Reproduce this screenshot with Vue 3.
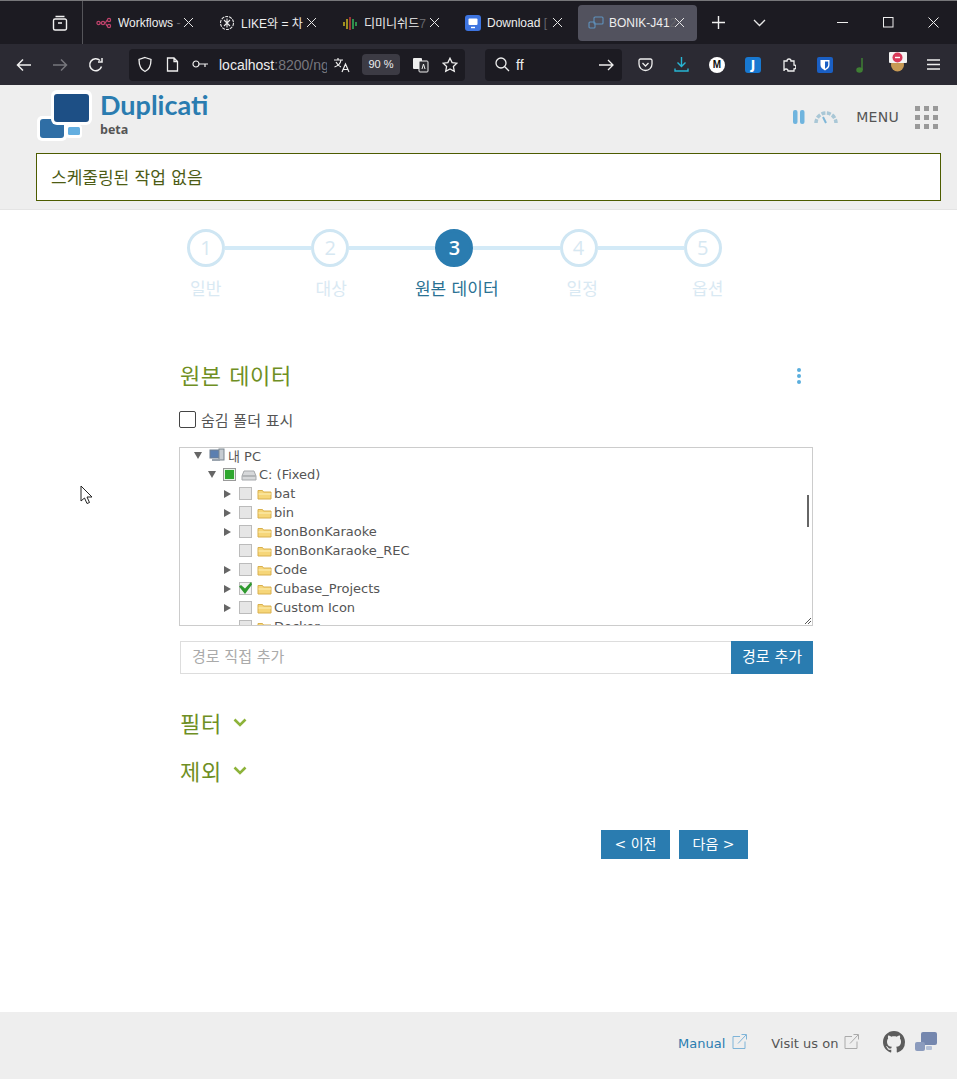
<script setup>
const tabs = [
  { title: 'Workflows', fade: ' -', icon: 'flow' },
  { title: 'LIKE와 = 차', fade: '', icon: 'gpt' },
  { title: '디미니쉬드', fade: '7', icon: 'wave' },
  { title: 'Download', fade: ' [', icon: 'dl' },
  { title: 'BONIK-J41', fade: '2', icon: 'dup', active: true }
]

const steps = [
  { n: 1, label: '일반' },
  { n: 2, label: '대상' },
  { n: 3, label: '원본 데이터', active: true },
  { n: 4, label: '일정' },
  { n: 5, label: '옵션' }
]

const folders = [
  { name: 'bat', arrow: true },
  { name: 'bin', arrow: true },
  { name: 'BonBonKaraoke', arrow: true },
  { name: 'BonBonKaraoke_REC', arrow: false },
  { name: 'Code', arrow: true },
  { name: 'Cubase_Projects', arrow: true, checked: true },
  { name: 'Custom Icon', arrow: true },
  { name: 'Docker', arrow: false }
]
</script>

<template>
  <div class="page">
    <div class="tabbar">
      <div class="tabs-btn">
        <svg width="18" height="18" viewBox="0 0 18 18" fill="none" stroke="#f2f2f2" stroke-width="1.4"><path d="M4.5 2.5h9M2.5 6.5a1.5 1.5 0 0 1 1.5-1.5h10a1.5 1.5 0 0 1 1.5 1.5v8a1.5 1.5 0 0 1-1.5 1.5H4a1.5 1.5 0 0 1-1.5-1.5zM7 9h4"/></svg>
      </div>
      <div v-for="t in tabs" :key="t.title" class="tab" :class="{ 'tab-active': t.active }">
        <svg v-if="t.icon === 'flow'" width="16" height="16" viewBox="0 0 16 16" fill="none" stroke="#c0436c" stroke-width="1.2"><circle cx="2.5" cy="8" r="1.6"/><circle cx="7" cy="8" r="1.6"/><circle cx="13" cy="5" r="1.6"/><circle cx="13" cy="11" r="1.6"/><path d="M4 8h1.5M8.6 8c2 0 1.5-3 2.8-3M8.6 8c2 0 1.5 3 2.8 3"/></svg>
        <svg v-else-if="t.icon === 'gpt'" width="16" height="16" viewBox="0 0 16 16" fill="none" stroke="#e8e8e8" stroke-width="1.1"><circle cx="8" cy="8" r="6.5" stroke-dasharray="3 1"/><path d="M5 5l6 6M11 5l-6 6M8 3.5v9"/></svg>
        <svg v-else-if="t.icon === 'wave'" width="16" height="16" viewBox="0 0 16 16" fill="none" stroke-width="1.4"><path d="M2 7v4M5 4v10" stroke="#d8c020"/><path d="M8 2v13" stroke="#d04040"/><path d="M11 4v10M14 7v4" stroke="#38c060"/></svg>
        <svg v-else-if="t.icon === 'dl'" width="16" height="16" viewBox="0 0 16 16"><rect width="16" height="16" rx="3" fill="#3d74e0"/><rect x="3.5" y="3.5" width="9" height="6.5" rx="1" fill="#fff"/><path d="M6 12.5h4" stroke="#fff" stroke-width="1.4"/></svg>
        <svg v-else width="16" height="14" viewBox="0 0 16 14" fill="none" stroke="#5f92bd" stroke-width="1.1"><rect x="6" y="1" width="9" height="7" rx="1"/><rect x="1" y="6" width="6" height="6" rx="1"/></svg>
        <span class="tab-title">{{ t.title }}<i>{{ t.fade }}</i></span>
        <svg class="tab-x" width="11" height="11" viewBox="0 0 11 11" stroke="#e6e6e6" stroke-width="1"><path d="M1 1l9 9M10 1l-9 9"/></svg>
      </div>
      <svg class="plus" width="13" height="13" viewBox="0 0 13 13" stroke="#f0f0f0" stroke-width="1.4"><path d="M6.5 0v13M0 6.5h13"/></svg>
      <svg class="chev" width="13" height="8" viewBox="0 0 13 8" fill="none" stroke="#e8e8e8" stroke-width="1.3"><path d="M1 1l5.5 5.5L12 1"/></svg>
      <div class="winbtns">
        <svg width="11" height="11" viewBox="0 0 11 11" stroke="#eee"><path d="M0 5.5h11"/></svg>
        <svg width="11" height="11" viewBox="0 0 11 11" fill="none" stroke="#eee"><rect x=".5" y=".5" width="9.5" height="9.5"/></svg>
        <svg width="11" height="11" viewBox="0 0 11 11" stroke="#eee"><path d="M.5.5l10 10M10.5.5l-10 10"/></svg>
      </div>
    </div>

    <div class="toolbar">
      <svg class="nav-first" width="16" height="14" viewBox="0 0 16 14" fill="none" stroke="#f0f0f0" stroke-width="1.5"><path d="M15 7H1.5M7 1.5L1.5 7 7 12.5"/></svg>
      <svg width="16" height="14" viewBox="0 0 16 14" fill="none" stroke="#77777d" stroke-width="1.5"><path d="M1 7h13.5M9 1.5L14.5 7 9 12.5"/></svg>
      <svg width="16" height="16" viewBox="0 0 16 16" fill="none" stroke="#f0f0f0" stroke-width="1.5"><path d="M13.5 9.5A6 6 0 1 1 12 3.5M14 1v4h-4"/></svg>
      <div class="urlbar">
        <svg width="16" height="17" viewBox="0 0 16 17" fill="none" stroke="#eee" stroke-width="1.3"><path d="M8 1.5l6 2c0 6-1.500 10-6 12-4.500-2-6-6-6-12z"/></svg>
        <svg width="13" height="15" viewBox="0 0 13 15" fill="none" stroke="#eee" stroke-width="1.3"><path d="M1.500 1h6.500l3.500 3.500V14h-10zM8 1v3.500h3.500"/></svg>
        <svg width="17" height="9" viewBox="0 0 17 9" fill="none" stroke="#eee" stroke-width="1.2"><circle cx="4" cy="4" r="3"/><path d="M7 4h9M13 4v3"/></svg>
        <span class="url">localhost<i>:8200/ng</i></span>
        <span class="translate-a">
          <svg width="17" height="16" viewBox="0 0 17 16" fill="none" stroke="#eee" stroke-width="1.2"><path d="M1 3h9M5 1v2M8 3c-.5 3-3 6-6.500 7M3 5c1 2 3 4 5 5M9 15l3.500-8 3.500 8M10.500 12.500h4"/></svg>
        </span>
        <span class="zoom-pill">90 %</span>
        <svg width="17" height="16" viewBox="0 0 17 16"><rect x="1" y="1" width="9" height="11" rx="1" fill="#eee"/><rect x="7" y="4" width="9" height="11" rx="1" fill="#2a2a30" stroke="#eee"/><path d="M10 12l1.500-5 1.500 5" stroke="#eee" fill="none"/></svg>
        <svg width="16" height="16" viewBox="0 0 16 16" fill="none" stroke="#eee" stroke-width="1.3"><path d="M8 1.200l2.100 4.400 4.700.6-3.400 3.300.9 4.800L8 12l-4.300 2.300.9-4.800L1.200 6.200l4.700-.6z"/></svg>
      </div>
      <div class="searchbar">
        <svg width="15" height="15" viewBox="0 0 15 15" fill="none" stroke="#eee" stroke-width="1.3"><circle cx="6" cy="6" r="5"/><path d="M9.800 9.800L14 14"/></svg>
        <span class="search-text">ff</span>
        <svg class="search-go" width="15" height="12" viewBox="0 0 15 12" fill="none" stroke="#eee" stroke-width="1.3"><path d="M0 6h14M9 1l5 5-5 5"/></svg>
      </div>
      <div class="ext">
        <svg width="15" height="14" viewBox="0 0 15 14" fill="none" stroke="#eee" stroke-width="1.3"><path d="M1 2.500A1.500 1.500 0 0 1 2.500 1h10A1.500 1.500 0 0 1 14 2.500V6a6.500 6.500 0 0 1-13 0zM4.500 5l3 3 3-3"/></svg>
        <svg width="15" height="15" viewBox="0 0 15 15" fill="none" stroke="#27b5d4" stroke-width="1.400"><path d="M7.500 0v9M3.500 5.500l4 4 4-4M1 11.500v2.500h13v-2.500"/></svg>
        <span class="ext-m">M</span>
        <span class="ext-j">J</span>
        <svg width="14" height="16" viewBox="0 0 14 16" fill="none" stroke="#eee" stroke-width="1.3"><path d="M1 5h3a2 2 0 1 1 4 0h3v4a2 2 0 1 1 0 4v2H5a2 2 0 1 0-4 0z" transform="translate(1 -1)"/></svg>
        <svg width="16" height="16" viewBox="0 0 16 16"><rect width="16" height="16" rx="2" fill="#1a5fc4"/><path d="M3.500 3h9v5c0 2.500-2 4-4.500 5.500C5.500 12 3.500 10.500 3.500 8z" fill="#fff"/><path d="M8 4.500h3.200V8c0 1.500-1.500 2.800-3.200 3.800z" fill="#1a5fc4"/></svg>
        <svg width="10" height="16" viewBox="0 0 10 16" fill="none" stroke="#3f7f34" stroke-width="1.500"><ellipse cx="3.500" cy="13" rx="2.500" ry="2" fill="#3f7f34"/><path d="M6 13V1"/></svg>
        <span class="ext-stop">
          <svg width="19" height="22" viewBox="0 0 19 22"><circle cx="9.500" cy="14" r="6.500" fill="#c79a55"/><rect x="1" y="1" width="18" height="11" rx="1" fill="#f4f4f4"/><circle cx="9.500" cy="6.500" r="5" fill="#d83a5a"/><path d="M7 6.500h5" stroke="#fff" stroke-width="1.400"/></svg>
        </span>
        <svg width="13" height="11" viewBox="0 0 13 11" stroke="#eee" stroke-width="1.300"><path d="M0 1h13M0 5.500h13M0 10h13"/></svg>
      </div>
    </div>

    <header class="app-header">
      <div class="brand-row">
        <div class="brand">
          <svg class="logo" width="57" height="52" viewBox="0 0 57 52">
            <rect x="1" y="26" width="30" height="25" rx="5" fill="#fff"/>
            <rect x="4" y="29" width="24" height="19" rx="3" fill="#2f6ea5"/>
            <rect x="30" y="35" width="16" height="13" rx="3" fill="#fff"/>
            <rect x="32" y="37" width="12" height="8" rx="1.500" fill="#63aee0"/>
            <rect x="15" y="0" width="41" height="35" rx="6" fill="#fff"/>
            <rect x="18" y="4" width="35" height="28" rx="3" fill="#1d4f85"/>
          </svg>
          <div class="brand-text">
            <div class="brand-name">Duplicati</div>
            <div class="brand-beta">beta</div>
          </div>
        </div>
        <div class="head-tools">
          <svg width="12" height="16" viewBox="0 0 12 16" fill="#6fb4de"><rect x="0" y="1" width="4.500" height="14" rx="2"/><rect x="7" y="1" width="4.500" height="14" rx="2"/></svg>
          <svg class="gauge" width="24" height="14" viewBox="0 0 24 14" fill="none" stroke="#a9c7d6" stroke-width="3.500" stroke-dasharray="4 1.500"><path d="M2 13A10 10 0 0 1 22 13"/><path d="M12 13L9 7" stroke="#7fb7d8" stroke-width="2" stroke-dasharray="none"/></svg>
          <span class="menu-label">MENU</span>
          <div class="menu-grid"><i v-for="n in 9" :key="n" /></div>
        </div>
      </div>
      <div class="alert">스케줄링된 작업 없음</div>
    </header>

    <main class="content">
      <div class="steps">
        <template v-for="(s, i) in steps" :key="s.n">
          <span v-if="i" class="step-line" />
          <span class="step-circle" :class="{ on: s.active }">{{ s.n }}</span>
        </template>
      </div>
      <div class="step-labels">
        <span v-for="s in steps" :key="s.n" :class="{ on: s.active }">{{ s.label }}</span>
      </div>

      <section class="form">
        <div class="title-row">
          <h2>원본 데이터</h2>
          <div class="dots"><i /><i /><i /></div>
        </div>
        <label class="hidden-toggle"><span class="box" />숨김 폴더 표시</label>

        <div class="tree">
          <div class="rows">
            <div class="row lv0">
              <span class="tri down" />
              <svg class="pc-icon" width="16" height="14" viewBox="0 0 16 14"><rect x="1" y="2" width="10" height="8" fill="#5b7fb0" stroke="#6f7f90"/><rect x="10" y="1" width="5" height="11" fill="#c6ccd2" stroke="#7d8790"/><rect x="3" y="11" width="8" height="2" fill="#9aa4ae"/></svg>
              <span>내 PC</span>
            </div>
            <div class="row lv1">
              <span class="tri down" />
              <span class="chk partial" />
              <svg class="drive-icon" width="16" height="12" viewBox="0 0 16 12"><path d="M3 2h10l2 5v4H1V7z" fill="#d6d8da" stroke="#a5a8ab"/><path d="M1.500 7h13" stroke="#8d9194"/></svg>
              <span>C: (Fixed)</span>
            </div>
            <div v-for="f in folders" :key="f.name" class="row lv2">
              <span class="tri" :class="{ none: !f.arrow }" />
              <span class="chk" :class="{ checked: f.checked }">
                <svg v-if="f.checked" width="13" height="13" viewBox="0 0 13 13"><path d="M0 4.500l2-1.500 4 3.500 6-6.500 1 2.500-7 9.500z" fill="#2f9a2f"/></svg>
              </span>
              <svg class="tree-icon" width="15" height="12" viewBox="0 0 15 12"><path d="M1 2.500h4.500l1 1.500h7.500v7H1z" fill="#f6d679" stroke="#d9b04e"/><path d="M1.500 6h12.500" stroke="#fdf0b8"/></svg>
              <span>{{ f.name }}</span>
            </div>
          </div>
          <span class="scroll-thumb" />
          <svg class="grip" width="8" height="8" viewBox="0 0 8 8" stroke="#555"><path d="M8 2L2 8M8 5L5 8"/></svg>
        </div>

        <div class="path-row">
          <div class="path-input">경로 직접 추가</div>
          <div class="path-btn">경로 추가</div>
        </div>

        <div class="fold first">
          <span>필터</span>
          <svg width="14" height="9" viewBox="0 0 14 9" fill="none" stroke="#8db33a" stroke-width="2.600"><path d="M1.500 1.500L7 7l5.500-5.500"/></svg>
        </div>
        <div class="fold">
          <span>제외</span>
          <svg width="14" height="9" viewBox="0 0 14 9" fill="none" stroke="#8db33a" stroke-width="2.600"><path d="M1.500 1.500L7 7l5.500-5.500"/></svg>
        </div>

        <div class="actions">
          <div class="act">&lt; 이전</div>
          <div class="act">다음 &gt;</div>
        </div>
      </section>
    </main>

    <footer class="app-footer">
      <span class="foot-link blue">Manual</span>
      <svg class="ext-link" width="15" height="15" viewBox="0 0 15 15" fill="none" stroke="#7fb4d8"><path d="M8 2.500H1v12h12V7.500M6 9.500L14 1M9.500.5h5v5"/></svg>
      <span class="foot-link visit">Visit us on</span>
      <svg class="ext-link" width="15" height="15" viewBox="0 0 15 15" fill="none" stroke="#aaa"><path d="M8 2.500H1v12h12V7.500M6 9.500L14 1M9.500.5h5v5"/></svg>
      <svg class="gh" width="22" height="22" viewBox="0 0 16 16" fill="#5c5c5c"><path d="M8 0C3.580 0 0 3.580 0 8c0 3.540 2.290 6.530 5.470 7.590.4.070.55-.17.55-.38 0-.19-.01-.82-.01-1.490-2.010.37-2.530-.49-2.690-.94-.09-.23-.48-.94-.82-1.130-.28-.15-.68-.52-.01-.53.63-.01 1.080.58 1.230.82.720 1.210 1.870.87 2.330.66.070-.52.280-.87.510-1.070-1.780-.2-3.640-.89-3.640-3.950 0-.87.310-1.590.820-2.150-.08-.2-.36-1.020.08-2.120 0 0 .67-.21 2.200.82.640-.18 1.320-.27 2-.27s1.360.09 2 .27c1.530-1.040 2.200-.82 2.200-.82.440 1.100.160 1.920.08 2.120.51.560.82 1.270.82 2.150 0 3.070-1.870 3.750-3.650 3.950.29.250.54.730.54 1.480 0 1.070-.01 1.930-.01 2.200 0 .21.150.46.55.38A8.010 8.010 0 0 0 16 8c0-4.420-3.580-8-8-8z"/></svg>
      <svg class="dup" width="22" height="19" viewBox="0 0 22 19"><rect x="6" y="0" width="16" height="13" rx="2" fill="#7587ae"/><rect x="0" y="10" width="10" height="9" rx="2" fill="#8b9bbd"/><rect x="11" y="14" width="6" height="4" rx="1" fill="#b4c0d6"/></svg>
    </footer>

    <svg class="cursor" width="13" height="19" viewBox="0 0 13 19" fill="#fff" stroke="#222"><path d="M1 1v15l3.500-3 2.500 5.500 2.500-1-2.500-5.500h5z"/></svg>
  </div>
</template>

<style>
html, body { margin: 0; background: #fff; }
</style>

<style scoped>
.page {
  position: relative;
  width: 957px;
  height: 1079px;
  display: flex;
  flex-direction: column;
  overflow: hidden;
  font-family: "DejaVu Sans", "Noto Sans CJK KR", sans-serif;
  color: #555;
}
i { font-style: normal; }

.tabbar {
  height: 44px;
  flex: none;
  display: flex;
  align-items: center;
  box-sizing: border-box;
  background: #1c1b22;
  color: #eee;
  font-family: "Liberation Sans", "Noto Sans CJK KR", sans-serif;
  font-size: 12px;
  border-top: 1px solid #77777a;
}
.tabs-btn {
  width: 83px;
  height: 43px;
  flex: none;
  box-sizing: border-box;
  border-right: 1px solid #55555a;
  display: flex;
  align-items: center;
  justify-content: center;
  padding-left: 38px;
}
.tab {
  width: 123px;
  flex: none;
  height: 36px;
  display: flex;
  align-items: center;
  gap: 6px;
  padding-left: 13px;
  box-sizing: border-box;
  position: relative;
  border-radius: 4px;
}
.tab-title { white-space: nowrap; overflow: hidden; width: 72px; }
.tab-title i { color: #66666c; }
.tab-x { position: absolute; right: 12px; top: 12px; }
.tab-active {
  background: #52525e;
  width: 119px;
  margin-left: 3px;
  padding-left: 10px;
  gap: 5px;
}
.plus { margin-left: 15px; flex: none; }
.chev { margin-left: 28px; flex: none; }
.winbtns {
  margin-left: auto;
  width: 102px;
  padding-right: 18px;
  display: flex;
  justify-content: space-between;
  flex: none;
}

.toolbar {
  height: 41px;
  flex: none;
  box-sizing: border-box;
  background: #2b2a33;
  display: flex;
  align-items: center;
  gap: 20px;
}
.nav-first { margin-left: 16px; }
.urlbar {
  margin-left: 5px;
  width: 336px;
  height: 32px;
  flex: none;
  box-sizing: border-box;
  background: #1c1b22;
  border-radius: 4px;
  display: flex;
  align-items: center;
  padding-left: 8px;
  gap: 13px;
  color: #eee;
  font-family: "Liberation Sans", sans-serif;
  font-size: 14px;
}
.url { width: 108px; overflow: hidden; white-space: nowrap; margin-left: -3px; margin-right: -7px; }
.url i { color: #77777d; }
.translate-a { display: flex; }
.zoom-pill {
  background: #3c3b44;
  border-radius: 4px;
  width: 38px;
  height: 21px;
  line-height: 21px;
  text-align: center;
  font-size: 11px;
  margin-right: -1px;
  margin-left: -1px;
}
.searchbar {
  width: 137px;
  height: 32px;
  flex: none;
  box-sizing: border-box;
  background: #1c1b22;
  border-radius: 4px;
  display: flex;
  align-items: center;
  padding: 0 8px 0 10px;
  color: #eee;
  font-family: "Liberation Sans", sans-serif;
  font-size: 14px;
}
.search-text { margin-left: 6px; }
.search-go { margin-left: auto; }
.ext {
  display: grid;
  grid-template-columns: repeat(9, 36px);
  place-items: center;
  margin-left: -15px;
  flex: none;
}
.ext-m {
  width: 16px;
  height: 16px;
  border-radius: 50%;
  background: #fff;
  color: #111;
  font: bold 10px/16px "Liberation Sans", sans-serif;
  text-align: center;
}
.ext-j {
  width: 16px;
  height: 16px;
  border-radius: 3px;
  background: #1878d0;
  color: #fff;
  font: bold 12px/16px "DejaVu Sans", sans-serif;
  text-align: center;
}
.ext-stop { display: flex; margin-top: -6px; }

.app-header {
  height: 125px;
  flex: none;
  box-sizing: border-box;
  background: #eee;
  border-bottom: 1px solid #e4e4e4;
  padding: 5px 16px 0 36px;
}
.brand-row {
  height: 63px;
  display: flex;
  justify-content: space-between;
  padding-right: 3px;
}
.brand { display: flex; align-items: flex-start; gap: 7px; }
.brand-name {
  color: #2a7cb0;
  font: bold 27px/32px "Lato", sans-serif;
  margin-top: -1px;
}
.brand-beta {
  color: #555;
  font: bold 12.500px/16px "Open Sans", sans-serif;
  margin-top: 1px;
}
.head-tools {
  display: flex;
  align-items: center;
  height: 54px;
}
.gauge { margin-left: 9px; }
.menu-label {
  margin-left: 18px;
  color: #555;
  font-size: 14px;
  letter-spacing: 0.3px;
}
.menu-grid {
  margin-left: 16px;
  display: grid;
  grid-template-columns: repeat(3, 5px);
  grid-auto-rows: 5px;
  gap: 4px;
}
.menu-grid i { background: #999; }
.alert {
  height: 48px;
  box-sizing: border-box;
  border: 1px solid #4d5c00;
  background: #fff;
  color: #4d5c14;
  font-size: 17px;
  line-height: 48px;
  padding-left: 14px;
}

.content { flex: 1; }
.steps {
  display: flex;
  align-items: center;
  padding: 19px 0 0 187px;
}
.step-circle {
  width: 38px;
  height: 38px;
  box-sizing: border-box;
  border: 3px solid #cfe6f3;
  border-radius: 50%;
  color: #d7e8f2;
  font: 400 20px/31px "Open Sans", sans-serif;
  text-align: center;
  flex: none;
  background: #fff;
}
.step-circle.on {
  background: #2a7cb0;
  border-color: #2a7cb0;
  color: #fff;
  font-weight: 600;
}
.step-line {
  width: 86.200px;
  height: 4px;
  background: #d3eaf7;
  flex: none;
}
.step-labels {
  display: flex;
  padding-left: 143px;
  margin-top: 10px;
}
.step-labels span {
  width: 125.500px;
  text-align: center;
  color: #d9e9f3;
  font-size: 17px;
  line-height: 24px;
}
.step-labels .on { color: #2a7193; }

.form {
  width: 633px;
  margin: 61px 0 0 180px;
}
.title-row {
  height: 30px;
  display: flex;
  align-items: center;
  justify-content: space-between;
}
h2 {
  margin: 0;
  font-size: 22px;
  font-weight: 400;
  letter-spacing: 0.600px;
  color: #6f8f24;
  line-height: 30px;
}
.dots {
  display: grid;
  gap: 2px;
  margin: -2px 12px 0 0;
}
.dots i {
  width: 4px;
  height: 4px;
  border-radius: 50%;
  background: #5aaedd;
}
.hidden-toggle {
  display: flex;
  align-items: center;
  margin: 17px 0 0 -1px;
  height: 20px;
  font-size: 15px;
  color: #555;
  gap: 5px;
}
.box {
  width: 17px;
  height: 17px;
  box-sizing: border-box;
  border: 1px solid #444;
  border-radius: 2px;
  background: #fff;
}
.tree {
  position: relative;
  margin: 18px 0 0 -1px;
  height: 179px;
  box-sizing: border-box;
  border: 1px solid #ccc;
  overflow: hidden;
}
.rows { margin-top: -3px; }
.row {
  height: 19px;
  display: flex;
  align-items: center;
  font-size: 13px;
  color: #555;
  white-space: nowrap;
}
.lv0 { padding-left: 14px; gap: 5px; height: 20px; }
.lv1 { padding-left: 28px; gap: 5px; }
.lv2 { padding-left: 44px; gap: 5px; }
.pc-icon { margin-right: -2px; }
.drive-icon { margin-right: -3px; }
.tree-icon { margin-right: -3px; }
.tri {
  width: 0;
  height: 0;
  border-style: solid;
  border-width: 4.500px 0 4.500px 7px;
  border-color: transparent transparent transparent #666;
  margin-right: 3px;
  flex: none;
}
.tri.down {
  border-width: 7px 4.500px 0 4.500px;
  border-color: #666 transparent transparent transparent;
  margin-right: 2px;
}
.tri.none { border-color: transparent; }
.chk {
  width: 13px;
  height: 13px;
  box-sizing: border-box;
  border: 1px solid #bbb;
  background: #e6e6e6;
  flex: none;
  display: flex;
}
.chk.partial {
  border-color: #999;
  background: #2fa72f;
  box-shadow: inset 0 0 0 1px #e5f3e5;
}
.chk.checked {
  border-color: #bbb;
  background: #f2f2f2;
}
.chk svg { margin: -1px; flex: none; }
.scroll-thumb {
  position: absolute;
  right: 3px;
  top: 47px;
  width: 2px;
  height: 32px;
  background: #666;
}
.grip {
  position: absolute;
  right: 1px;
  bottom: 1px;
}
.path-row {
  display: flex;
  margin-top: 15px;
  height: 33px;
}
.path-input {
  flex: 1;
  box-sizing: border-box;
  border: 1px solid #ddd;
  border-right: none;
  font-size: 15px;
  color: #aaa;
  line-height: 30px;
  padding-left: 11px;
}
.path-btn {
  width: 82px;
  background: #2a7cb0;
  color: #fff;
  font-size: 15px;
  line-height: 33px;
  text-align: center;
}
.fold {
  display: flex;
  align-items: center;
  gap: 11px;
  height: 30px;
  margin-top: 18px;
  font-size: 22px;
  letter-spacing: 0.800px;
  color: #6f8f24;
}
.fold.first { margin-top: 33px; }
.actions {
  display: flex;
  gap: 9px;
  margin: 45px 0 0 421px;
}
.act {
  width: 69px;
  height: 29px;
  background: #2a7cb0;
  color: #fff;
  font-size: 14px;
  line-height: 28px;
  text-align: center;
}

.app-footer {
  height: 67px;
  flex: none;
  background: #eee;
  display: flex;
  align-items: center;
  padding: 0 19px 4px 678px;
  box-sizing: border-box;
  font-size: 13px;
}
.foot-link { white-space: nowrap; }
.blue { color: #2a7cb0; }
.visit { margin-left: 24px; color: #555; }
.ext-link { margin: -4px 0 0 7px; flex: none; }
.visit + .ext-link { margin-left: 6px; }
.gh { margin: -4px 0 0 24px; flex: none; }
.dup { margin: -4px 0 0 10px; flex: none; }

.cursor {
  position: absolute;
  left: 80px;
  top: 485px;
}
</style>
